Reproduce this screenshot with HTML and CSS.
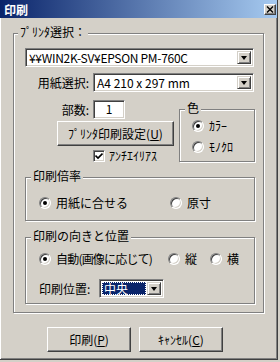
FILE: index.html
```html
<!DOCTYPE html>
<html lang="ja">
<head>
    <meta charset="UTF-8">
    <title>印刷</title>
    <link rel="stylesheet" href="styles.css">
</head>
<body>
    <div class="window">
        <div class="titlebar">
            <span class="title">印刷</span>
            <span class="close-btn">
                <svg width="8" height="7" viewBox="0 0 8 7"><path d="M1 0.5 L7 6.5 M7 0.5 L1 6.5" stroke="#000" stroke-width="1.4"/></svg>
            </span>
        </div>
        <div class="dialog-body">
            <div class="group group-printer">
                <span class="group-label">ﾌﾟﾘﾝﾀ選択：</span>
                <div class="combo combo-printer">
                    <span class="combo-text printer-name">¥¥WIN2K-SV¥EPSON PM-760C</span>
                    <span class="combo-btn"><i class="arrow"></i></span>
                </div>
                <div class="form-row paper-row">
                    <span class="row-label">用紙選択:</span>
                    <div class="combo combo-paper">
                        <span class="combo-text">A4 210 x 297 mm</span>
                        <span class="combo-btn"><i class="arrow"></i></span>
                    </div>
                </div>
                <div class="middle">
                    <div class="middle-left">
                        <div class="form-row copies-row">
                            <span class="row-label">部数:</span>
                            <div class="textbox">1</div>
                        </div>
                        <div class="btn btn-setup">ﾌﾟﾘﾝﾀ印刷設定(<u>U</u>)</div>
                        <div class="check-row">
                            <span class="checkbox">
                                <svg width="8" height="8" viewBox="0 0 8 8"><path d="M0.5 3.5 L3 6 L7.5 1.5" fill="none" stroke="#000" stroke-width="1.6"/></svg>
                            </span>
                            <span>ｱﾝﾁｴｲﾘｱｽ</span>
                        </div>
                    </div>
                    <div class="group group-color">
                        <span class="group-label">色</span>
                        <div class="radio-item"><span class="radio checked"></span>ｶﾗｰ</div>
                        <div class="radio-item"><span class="radio"></span>ﾓﾉｸﾛ</div>
                    </div>
                </div>
                <div class="group group-scale">
                    <span class="group-label">印刷倍率</span>
                    <div class="radio-grid scale-grid">
                        <div class="radio-item"><span class="radio checked"></span>用紙に合せる</div>
                        <div class="radio-item"><span class="radio"></span>原寸</div>
                    </div>
                </div>
                <div class="group group-orient">
                    <span class="group-label">印刷の向きと位置</span>
                    <div class="radio-grid orient-grid">
                        <div class="radio-item auto-item"><span class="radio checked"></span>自動(画像に応じて)</div>
                        <div class="radio-item"><span class="radio"></span>縦</div>
                        <div class="radio-item"><span class="radio"></span>横</div>
                    </div>
                    <div class="form-row position-row">
                        <span class="row-label">印刷位置:</span>
                        <div class="combo combo-position">
                            <span class="combo-text"><span class="selected">中央</span></span>
                            <span class="combo-btn"><i class="arrow"></i></span>
                        </div>
                    </div>
                </div>
            </div>
            <div class="buttons">
                <div class="btn btn-action">印刷(<u>P</u>)</div>
                <div class="btn btn-action">ｷｬﾝｾﾙ(<u>C</u>)</div>
            </div>
        </div>
    </div>
</body>
</html>
```

FILE: styles.css
```css
* {
    box-sizing: border-box;
}
body {
    margin: 0;
    background-color: #d4d0c8;
    font-family: "Noto Sans CJK JP", "Noto Sans", sans-serif;
    font-size: 12px;
    color: #000;
}
.window {
    width: 278px;
    height: 360px;
    background-color: #d4d0c8;
    border-right: 1px solid #404040;
    border-bottom: 1px solid #404040;
    box-shadow: inset -1px -1px 0 #808080;
}
.titlebar {
    height: 18px;
    display: flex;
    align-items: center;
    justify-content: space-between;
    padding: 0 1px 0 4px;
    background: linear-gradient(to right, #0a246a, #a6caf0);
}
.title {
    color: #fff;
    font-weight: bold;
    line-height: 18px;
    padding-top: 1px;
}
.close-btn {
    width: 12px;
    height: 11px;
    display: flex;
    align-items: center;
    justify-content: center;
    background-color: #d4d0c8;
    border: 1px solid;
    border-color: #fff #404040 #404040 #fff;
    box-shadow: inset -1px -1px 0 #808080;
}
.dialog-body {
    height: 341px;
    border-left: 1px solid #fff;
    padding: 15px 0 0 12px;
}
.group {
    position: relative;
    border: 1px solid #808080;
    box-shadow: 1px 1px 0 #fff, inset 1px 1px 0 #fff;
}
.group-label {
    position: absolute;
    top: -9px;
    left: 5px;
    padding: 0 2px;
    line-height: 14px;
    background-color: #d4d0c8;
    white-space: nowrap;
}
.group-printer {
    width: 251px;
    height: 280px;
    padding: 14px 0 0 11px;
}
.group-printer > .group-label {
    left: 4px;
}
.combo {
    display: flex;
    height: 19px;
    padding: 2px;
    background-color: #fff;
    border: 1px solid;
    border-color: #808080 #fff #fff #808080;
    box-shadow: inset 1px 1px 0 #404040, inset -1px -1px 0 #d4d0c8;
}
.combo-text {
    flex: 1;
    padding-left: 1px;
    line-height: 13px;
    white-space: nowrap;
}
.printer-name {
    letter-spacing: -0.3px;
}
.combo-btn {
    width: 14px;
    display: flex;
    align-items: center;
    justify-content: center;
    background-color: #d4d0c8;
    border: 1px solid;
    border-color: #d4d0c8 #404040 #404040 #d4d0c8;
    box-shadow: inset 1px 1px 0 #fff, inset -1px -1px 0 #808080;
}
.arrow {
    width: 1px;
    height: 0;
    border-top: 4px solid #000;
    border-left: 3px solid transparent;
    border-right: 3px solid transparent;
}
.combo-printer {
    width: 229px;
}
.form-row {
    display: flex;
    align-items: center;
}
.paper-row {
    margin-top: 6px;
}
.paper-row .row-label,
.copies-row .row-label {
    width: 64px;
    margin-right: 4px;
    text-align: right;
}
.combo-paper {
    width: 161px;
}
.middle {
    display: flex;
    align-items: flex-start;
    margin-top: 8px;
}
.middle-left {
    width: 154px;
}
.textbox {
    width: 32px;
    height: 19px;
    line-height: 15px;
    text-align: center;
    background-color: #fff;
    border: 1px solid;
    border-color: #808080 #fff #fff #808080;
    box-shadow: inset 1px 1px 0 #404040, inset -1px -1px 0 #d4d0c8;
}
.btn {
    display: flex;
    align-items: center;
    justify-content: center;
    background-color: #d4d0c8;
    border: 1px solid;
    border-color: #fff #404040 #404040 #fff;
    box-shadow: inset -1px -1px 0 #808080;
    white-space: nowrap;
}
.btn-setup {
    width: 117px;
    height: 25px;
    margin: 2px 0 0 32px;
}
.check-row {
    display: flex;
    align-items: center;
    gap: 4px;
    height: 13px;
    margin: 3px 0 0 68px;
}
.checkbox {
    width: 12px;
    height: 12px;
    display: flex;
    align-items: center;
    justify-content: center;
    background-color: #fff;
    border: 1px solid;
    border-color: #808080 #fff #fff #808080;
    box-shadow: inset 1px 1px 0 #404040, inset -1px -1px 0 #d4d0c8;
}
.group-color {
    width: 76px;
    height: 53px;
    margin-top: 9px;
    padding: 9px 0 0 12px;
}
.group-color .radio-item + .radio-item {
    margin-top: 7px;
}
.radio-item {
    display: flex;
    align-items: center;
    gap: 5px;
    height: 14px;
    line-height: 14px;
    white-space: nowrap;
}
.radio {
    position: relative;
    flex: none;
    width: 12px;
    height: 12px;
    border-radius: 50%;
    background-color: #fff;
    border: 1px solid;
    border-color: #808080 #fff #fff #808080;
    box-shadow: inset 1px 1px 0 #404040, inset -1px -1px 0 #d4d0c8;
}
.radio.checked::after {
    content: "";
    position: absolute;
    left: 3px;
    top: 3px;
    width: 4px;
    height: 4px;
    border-radius: 50%;
    background-color: #000;
}
.radio-grid {
    display: grid;
}
.group-scale {
    width: 230px;
    height: 44px;
    margin-top: 15px;
    padding: 18px 0 0 13px;
}
.scale-grid {
    grid-template-columns: 131px auto;
}
.group-orient {
    width: 230px;
    height: 67px;
    margin-top: 16px;
    padding: 14px 0 0 13px;
}
.orient-grid {
    grid-template-columns: 129px 42px auto;
}
.auto-item {
    letter-spacing: -0.8px;
}
.position-row {
    margin-top: 13px;
}
.position-row .row-label {
    width: 60px;
}
.combo-position {
    width: 65px;
}
.combo-position .combo-text {
    padding: 0 1px 0 0;
}
.selected {
    display: block;
    height: 100%;
    padding-left: 2px;
    color: #fff;
    background-color: #0a246a;
    outline: 1px dotted #fff;
    outline-offset: -1px;
}
.buttons {
    display: flex;
    gap: 8px;
    margin: 14px 0 0 34px;
}
.btn-action {
    width: 84px;
    height: 25px;
}
```
